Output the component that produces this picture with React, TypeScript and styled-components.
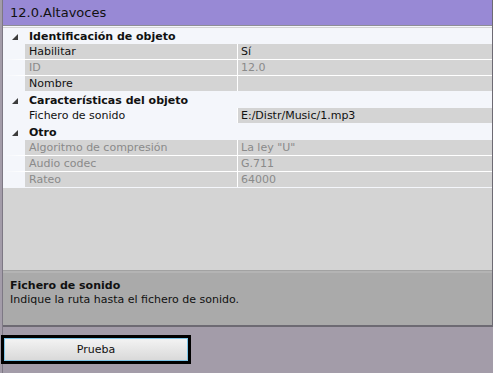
import styled, { createGlobalStyle } from "styled-components";

const GlobalStyle = createGlobalStyle`
  html, body {
    margin: 0;
    padding: 0;
    background: #a39ca9;
  }
  body {
    font-family: "DejaVu Sans", Verdana, sans-serif;
    font-size: 11px;
    color: #111;
  }
`;

type Prop = { name: string; value: string; readOnly?: boolean; selected?: boolean };
type Section = { title: string; props: Prop[] };

const sections: Section[] = [
  {
    title: "Identificación de objeto",
    props: [
      { name: "Habilitar", value: "Sí" },
      { name: "ID", value: "12.0", readOnly: true },
      { name: "Nombre", value: "" },
    ],
  },
  {
    title: "Características del objeto",
    props: [{ name: "Fichero de sonido", value: "E:/Distr/Music/1.mp3", selected: true }],
  },
  {
    title: "Otro",
    props: [
      { name: "Algoritmo de compresión", value: 'La ley "U"', readOnly: true },
      { name: "Audio codec", value: "G.711", readOnly: true },
      { name: "Rateo", value: "64000", readOnly: true },
    ],
  },
];

const Expander = () => (
  <svg width="7" height="7" viewBox="0 0 7 7">
    <polygon points="6,0 6,6 0,6" fill="#3c3c3c" />
  </svg>
);

const App: React.FC = () => {
  return (
    <Page>
      <GlobalStyle />
      <Panel>
        <Header>12.0.Altavoces</Header>
        <Grid>
          {sections.map((section) => (
            <div key={section.title}>
              <SectionRow>
                <Toggle>
                  <Expander />
                </Toggle>
                <SectionTitle>{section.title}</SectionTitle>
              </SectionRow>
              {section.props.map((p) => (
                <PropRow key={p.name}>
                  <NameCell $selected={p.selected} $readOnly={p.readOnly}>
                    {p.name}
                  </NameCell>
                  <ValueCell $readOnly={p.readOnly}>{p.value}</ValueCell>
                </PropRow>
              ))}
            </div>
          ))}
        </Grid>
        <Description>
          <DescTitle>Fichero de sonido</DescTitle>
          <DescText>Indique la ruta hasta el fichero de sonido.</DescText>
        </Description>
      </Panel>
      <Actions>
        <TestButton>Prueba</TestButton>
      </Actions>
    </Page>
  );
};

const Page = styled.div`
  height: 373px;
  width: 493px;
  box-sizing: border-box;
  border-left: 1px solid #7d7884;
  margin-left: 2px;
  width: 491px;
`;

const Panel = styled.div`
  width: 489px;
  border-right: 2px solid #6d6a73;
  border-bottom: 2px solid #6d6a73;
  display: flex;
  flex-direction: column;
`;

const Header = styled.div`
  height: 25px;
  background: #9889d5;
  border-bottom: 1px solid #8e8e96;
  padding-left: 7px;
  display: flex;
  align-items: center;
  font-size: 13px;
  color: #111;
`;

const Grid = styled.div`
  height: 242px;
  background: #d4d4d4;
  padding-top: 1px;
  background-clip: padding-box;
  border-top: 1px solid #f4f6fb;
  border-bottom: 1px solid #a2a2a2;
`;

const SectionRow = styled.div`
  height: 16px;
  background: #f4f6fb;
  display: flex;
  align-items: center;
`;

const Toggle = styled.div`
  width: 26px;
  display: flex;
  justify-content: flex-start;
  padding-left: 9px;
  box-sizing: border-box;
  padding-top: 2px;
`;

const SectionTitle = styled.span`
  font-weight: bold;
  font-size: 11px;
`;

const PropRow = styled.div`
  height: 16px;
  display: grid;
  grid-template-columns: 212px 1fr;
  column-gap: 1px;
  background: #ffffff;
  border-left: 22px solid #f4f6fb;
  border-bottom: 1px solid #ffffff;
  box-sizing: border-box;
  &:last-child {
    border-bottom-color: #f4f6fb;
  }
`;

const NameCell = styled.div<{ $selected?: boolean; $readOnly?: boolean }>`
  background: ${(p) => (p.$selected ? "#f4f6fb" : "#d4d4d4")};
  color: ${(p) => (p.$readOnly ? "#8a8a8a" : "#111")};
  padding-left: 4px;
  line-height: 15px;
  white-space: nowrap;
  overflow: hidden;
`;

const ValueCell = styled.div<{ $readOnly?: boolean }>`
  background: #d4d4d4;
  color: ${(p) => (p.$readOnly ? "#8a8a8a" : "#111")};
  padding-left: 3px;
  line-height: 15px;
  white-space: nowrap;
`;

const Description = styled.div`
  height: 50px;
  background: #aaaaaa;
  border-top: 2px solid #b4b4b4;
  padding: 6px 7px 0;
  box-sizing: border-box;
  height: 54px;
`;

const DescTitle = styled.div`
  font-weight: bold;
  line-height: 14px;
`;

const DescText = styled.div`
  line-height: 14px;
`;

const Actions = styled.div`
  padding-top: 8px;
  margin-left: -2px;
`;

const TestButton = styled.button`
  width: 190px;
  height: 29px;
  border: 3px solid #000;
  outline: 1px solid #7fc6e8;
  outline-offset: -4px;
  background: linear-gradient(#f4f4f4, #e6e6e6 50%, #d8d8d8);
  font-family: "DejaVu Sans", Verdana, sans-serif;
  font-size: 11px;
  color: #111;
  padding: 0;
`;

export default App;
